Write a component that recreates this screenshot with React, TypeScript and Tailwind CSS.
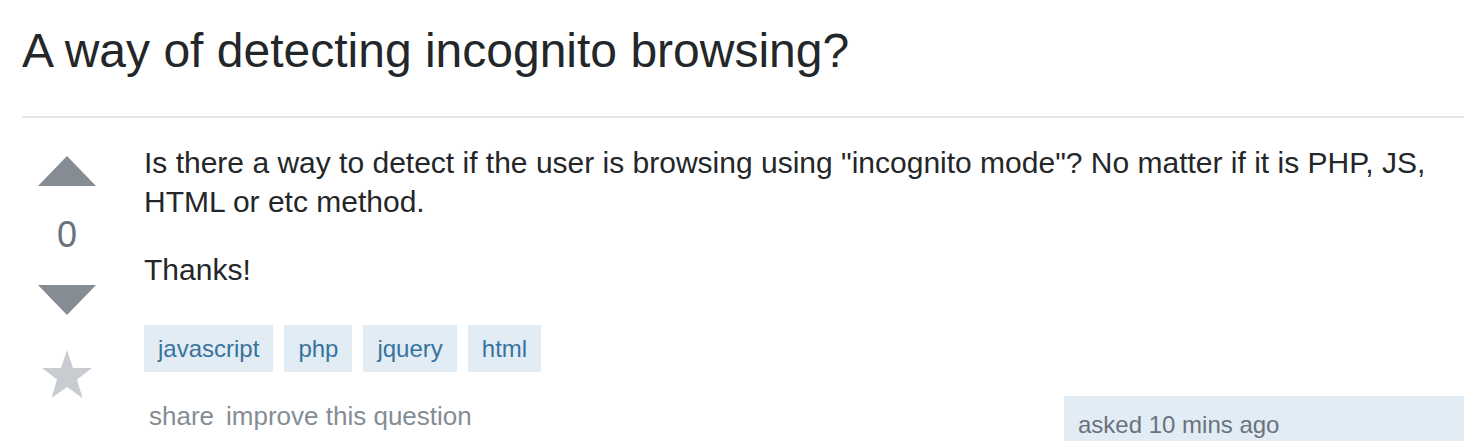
import React from "react";

const tags = ["javascript", "php", "jquery", "html"];

function VoteColumn() {
  return (
    <div className="w-[90px] shrink-0 flex flex-col items-center pt-[38px]">
      <button aria-label="up vote">
        <svg width="58" height="30" viewBox="0 0 58 30" className="block">
          <path d="M0 30 L29 0 L58 30 Z" fill="#858c93" />
        </svg>
      </button>
      <div className="mt-[29px] text-[36px] leading-[40px] text-[#6a737c]">0</div>
      <button aria-label="down vote" className="mt-[30px]">
        <svg width="58" height="30" viewBox="0 0 58 30" className="block">
          <path d="M0 0 L58 0 L29 30 Z" fill="#858c93" />
        </svg>
      </button>
      <button aria-label="favorite" className="mt-[35px]">
        <svg width="50" height="48" viewBox="0 0 50 48" className="block">
          <path
            d="M25 0 L31 18 L50 18 L35 29.5 L40.5 48 L25 37 L9.5 48 L15 29.5 L0 18 L19 18 Z"
            fill="#c8ccd0"
          />
        </svg>
      </button>
    </div>
  );
}

export default function App() {
  return (
    <div className="pl-[22px] pr-[7px] pt-[20px] bg-white font-['Liberation_Sans',Arial,sans-serif] text-[#242729] overflow-hidden h-[441px]">
      <h1 className="text-[48px] leading-[62px] font-normal">
        A way of detecting incognito browsing?
      </h1>
      <div className="mt-[34px] h-[2px] bg-[#e4e6e8]" />

      <div className="flex">
        <VoteColumn />

        <div className="flex-1 pl-[32px] pt-[25px]">
          <p className="text-[30px] leading-[39px] mb-[29px]">
            Is there a way to detect if the user is browsing using "incognito mode"? No matter if it is PHP, JS, HTML or etc method.
          </p>
          <p className="text-[30px] leading-[39px]">Thanks!</p>

          <div className="mt-[36px] flex gap-[11px]">
            {tags.map((t) => (
              <a
                key={t}
                className="h-[47px] px-[14px] flex items-center bg-[#e1ecf4] text-[#39739d] text-[24px]"
              >
                {t}
              </a>
            ))}
          </div>

          <div className="flex justify-between items-start">
            <div className="mt-[28px] pl-[5px] flex gap-[12px] text-[26px] leading-[32px] text-[#848d95]">
              <a>share</a>
              <a>improve this question</a>
            </div>
            <div className="mt-[24px] w-[400px] h-[90px] bg-[#e1ecf4] pl-[14px] pt-[13px] text-[24px] leading-[32px] text-[#6a737c]">
              asked 10 mins ago
            </div>
          </div>
        </div>
      </div>
    </div>
  );
}
